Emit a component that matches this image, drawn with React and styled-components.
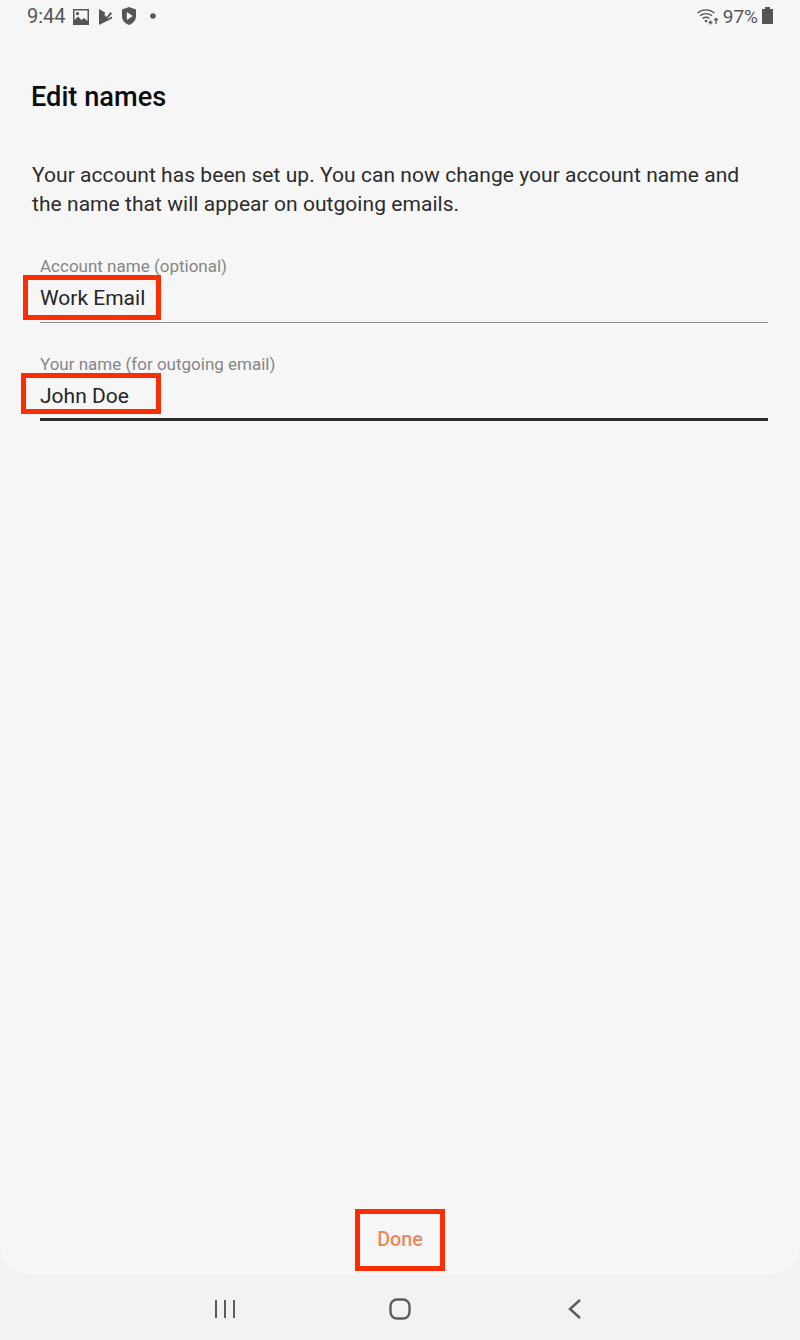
import React from "react";
import styled, { createGlobalStyle } from "styled-components";

const Global = createGlobalStyle`
  html, body { margin: 0; padding: 0; background: #f2f2f2; }
  body { font-family: Roboto, "Liberation Sans", sans-serif; }
`;

const Phone = styled.div`
  width: 800px;
  height: 1340px;
  display: flex;
  flex-direction: column;
  background: #f2f2f2;
  overflow: hidden;
`;

const Screen = styled.div`
  flex: 1;
  display: flex;
  flex-direction: column;
  background: #f6f6f6;
  border-radius: 0 0 30px 30px;
`;

const StatusBar = styled.div`
  height: 32px;
  display: flex;
  align-items: center;
  justify-content: space-between;
  padding: 0 27px;
  color: #555;
  font-size: 20px;
`;

const StatusGroup = styled.div`
  display: flex;
  align-items: center;
`;

const Clock = styled.span`
  margin-right: 7px;
`;

const Percent = styled.span`
  font-size: 19px;
  margin-right: 4px;
`;

const StatusIcon = styled.svg`
  display: block;
  margin-right: ${(p) => p.$gap || 0}px;
`;

const Title = styled.h1`
  margin: 48px 0 0 31px;
  font-size: 27.2px;
  line-height: 34px;
  font-weight: 500;
  color: #0c0c0c;
`;

const Intro = styled.p`
  margin: 47px 40px 0 32px;
  font-size: 21px;
  line-height: 29px;
  letter-spacing: 0.05px;
  color: #2c2c2c;
`;

const Form = styled.div`
  margin: 36px 32px 0 40px;
  display: flex;
  flex-direction: column;
  gap: 30px;
`;

const Field = styled.div`
  display: flex;
  flex-direction: column;
`;

const Label = styled.label`
  font-size: 17px;
  line-height: 22px;
  color: #868686;
`;

const Value = styled.div`
  display: flex;
  align-items: center;
  font-size: 21px;
  color: #252525;
  box-sizing: border-box;
  border-bottom: ${(p) => (p.$focused ? "3px solid #2b2b2b" : "1px solid #8c8c8c")};
  height: 46px;
  padding-bottom: ${(p) => (p.$focused ? 1 : 4)}px;
`;

const Marked = styled.span`
  position: relative;
`;

const Highlight = styled.span`
  position: absolute;
  left: ${(p) => p.$left}px;
  top: ${(p) => p.$top}px;
  width: ${(p) => p.$width}px;
  height: ${(p) => p.$height}px;
  border: 5px solid #fb2e03;
  box-sizing: border-box;
  pointer-events: none;
`;

const Footer = styled.div`
  margin-top: auto;
  height: 65px;
  display: flex;
  align-items: center;
  justify-content: center;
  padding-bottom: 7px;
  box-sizing: border-box;
`;

const Done = styled.button`
  position: relative;
  border: 0;
  padding: 0;
  background: none;
  font: 500 19.8px Roboto, sans-serif;
  color: #e98a5f;
`;

const NavBar = styled.div`
  height: 65px;
  padding-top: 2px;
  box-sizing: border-box;
  display: flex;
  align-items: center;
  justify-content: center;
`;

const NavSlot = styled.div`
  width: 175px;
  display: flex;
  justify-content: center;
`;

const NavIcon = styled.svg`
  display: block;
  stroke: #5c5c5c;
  fill: none;
`;

export default function App() {
  return (
    <Phone>
      <Global />
      <Screen>
        <StatusBar>
          <StatusGroup>
            <Clock>9:44</Clock>
            <StatusIcon width="16" height="20" viewBox="0 0 16 20" $gap={10}>
              <path fillRule="evenodd" fill="#555" d="M0 3h16v16H0zM1.500 4.500v9.500l3.500-3.500 3.500 3.500 2.500-2 3.500 3V4.500zM4.500 6a1.600 1.600 0 1 0 .01 0z" />
            </StatusIcon>
            <StatusIcon width="13" height="20" viewBox="0 0 13 20" $gap={10}>
              <path fill="#555" d="M0 3l6 3.500-.5 2.500 2 2L11.500 6 13 7.500 8 13l5-2.500v2L0 19z" />
            </StatusIcon>
            <StatusIcon width="14" height="20" viewBox="0 0 14 20" $gap={14}>
              <path fillRule="evenodd" fill="#555" d="M7 1l7 2.500V10c0 4-2.800 7.500-7 9C2.800 17.500 0 14 0 10V3.500zM4.800 6v8l6-4z" />
            </StatusIcon>
            <StatusIcon width="6" height="6" viewBox="0 0 6 6">
              <circle cx="3" cy="3" r="2.800" fill="#555" />
            </StatusIcon>
          </StatusGroup>
          <StatusGroup>
            <StatusIcon width="21" height="18" viewBox="0 0 21 18" $gap={5}>
              <g fill="none" stroke="#555" strokeWidth="1.400">
                <path d="M0.500 6a13 13 0 0 1 17 0" />
                <path d="M3 8.800a9.500 9.500 0 0 1 12 0" />
                <path d="M5.500 11.500a6 6 0 0 1 7 0" />
              </g>
              <circle cx="9" cy="14" r="1.300" fill="#555" />
              <path stroke="#555" strokeWidth="1.300" fill="none" d="M11.500 15.500h4M13.500 13.500v4M19 17V11.500M17.300 13.200l1.700-1.700 1.700 1.700" />
            </StatusIcon>
            <Percent>97%</Percent>
            <StatusIcon width="11" height="18" viewBox="0 0 11 18">
              <path fill="#555" d="M3 0h5v2h3v15H0V2h3z" />
            </StatusIcon>
          </StatusGroup>
        </StatusBar>

        <Title>Edit names</Title>
        <Intro>
          Your account has been set up. You can now change your account name and the name that will appear on outgoing emails.
        </Intro>

        <Form>
          <Field>
            <Label>Account name (optional)</Label>
            <Value>
              <Marked>
                Work Email
                <Highlight $left={-17} $top={-11} $width={138} $height={45} />
              </Marked>
            </Value>
          </Field>
          <Field>
            <Label>Your name (for outgoing email)</Label>
            <Value $focused>
              <Marked>
                John Doe
                <Highlight $left={-19} $top={-11} $width={140} $height={41} />
              </Marked>
            </Value>
          </Field>
        </Form>

        <Footer>
          <Done>
            Done
            <Highlight $left={-22} $top={-19} $width={90} $height={62} />
          </Done>
        </Footer>
      </Screen>

      <NavBar>
        <NavSlot>
          <NavIcon width="20" height="20" viewBox="0 0 20 20" strokeWidth="2">
            <path d="M1 1v18M10 1v18M19 1v18" />
          </NavIcon>
        </NavSlot>
        <NavSlot>
          <NavIcon width="22" height="22" viewBox="0 0 22 22" strokeWidth="2.400">
            <rect x="1.500" y="1.500" width="19" height="19" rx="6.500" />
          </NavIcon>
        </NavSlot>
        <NavSlot>
          <NavIcon width="14" height="20" viewBox="0 0 14 20" strokeWidth="2.400">
            <path d="M12 1L2 10l10 9" />
          </NavIcon>
        </NavSlot>
      </NavBar>
    </Phone>
  );
}
